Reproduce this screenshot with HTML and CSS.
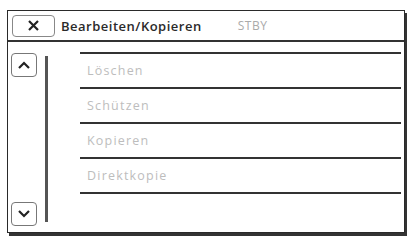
FILE: index.html
```html
<!DOCTYPE html>
<html>
<head>
<meta charset="utf-8">
<link rel="stylesheet" href="styles.css">
</head>
<body>
<div class="screen">
  <div class="header">
    <div class="close">
      <svg width="13" height="11" viewBox="0 0 13 11"><path d="M2 1 L11 10 M11 1 L2 10" stroke="#222" stroke-width="2.2" fill="none"/></svg>
    </div>
    <div class="title">Bearbeiten/Kopieren</div>
    <div class="stby">STBY</div>
  </div>
  <div class="body">
    <div class="side">
      <div class="arrow"><svg width="14" height="8" viewBox="0 0 14 8"><path d="M2 7 L7 2 L12 7" stroke="#222" stroke-width="2.2" fill="none"/></svg></div>
      <div class="arrow"><svg width="14" height="8" viewBox="0 0 14 8"><path d="M2 1 L7 6 L12 1" stroke="#222" stroke-width="2.2" fill="none"/></svg></div>
    </div>
    <div class="bar"></div>
    <div class="list">
      <div class="item">Löschen</div>
      <div class="item">Schützen</div>
      <div class="item">Kopieren</div>
      <div class="item">Direktkopie</div>
    </div>
  </div>
</div>
</body>
</html>
```
FILE: styles.css
```css
html, body { margin: 0; padding: 0; background: #fff; }
body { width: 412px; height: 243px; font-family: "Open Sans", "DejaVu Sans", sans-serif; }
.screen {
  position: relative;
  margin: 10px 0 0 7px;
  width: 398px;
  height: 223px;
  border: 1.5px solid #2a2a2a;
  box-shadow: 2px 3px 0 #333;
  box-sizing: border-box;
  background: #fff;
  display: flex;
  flex-direction: column;
}
.header {
  height: 31px;
  border-bottom: 2px solid #333;
  display: flex;
  align-items: center;
  box-sizing: border-box;
}
.close {
  margin-left: 4px;
  width: 43px;
  height: 22px;
  border: 1.5px solid #888;
  border-radius: 4px;
  box-sizing: border-box;
  display: flex;
  align-items: center;
  justify-content: center;
}
.title {
  margin-left: 6px;
  font-size: 13px;
  font-weight: 600;
  color: #2a2a2a;
  letter-spacing: 0.5px;
}
.stby {
  margin-left: 36px;
  font-size: 12px;
  color: #aaa;
  letter-spacing: 0.5px;
}
.body {
  flex: 1;
  display: flex;
  position: relative;
}
.side {
  width: 26px;
  margin-left: 3px;
  padding: 11px 0 6px;
  display: flex;
  flex-direction: column;
  justify-content: space-between;
}
.arrow {
  width: 26px;
  height: 24px;
  border: 1.5px solid #777;
  border-radius: 4px;
  box-sizing: border-box;
  display: flex;
  align-items: center;
  justify-content: center;
}
.bar {
  width: 3px;
  background: #555;
  margin: 14px 0 10px 8px;
}
.list {
  flex: 1;
  margin-left: 32px;
  margin-right: 3px;
  padding-top: 10px;
}
.item {
  height: 33px;
  border-top: 2px solid #333;
  display: flex;
  align-items: center;
  padding-left: 7px;
  font-size: 12.5px;
  color: #bdbdbd;
  letter-spacing: 1.2px;
}
.item:last-child { border-bottom: 2px solid #333; }
```
